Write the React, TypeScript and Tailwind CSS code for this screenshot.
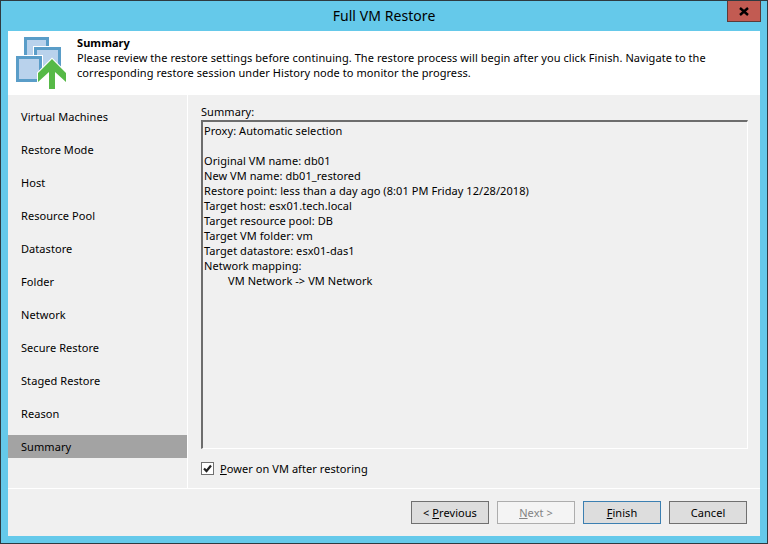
import type { ReactNode } from "react";

const STEPS = [
  "Virtual Machines",
  "Restore Mode",
  "Host",
  "Resource Pool",
  "Datastore",
  "Folder",
  "Network",
  "Secure Restore",
  "Staged Restore",
  "Reason",
  "Summary",
];

const SUMMARY_LINES = [
  "Proxy: Automatic selection",
  "",
  "Original VM name: db01",
  "New VM name: db01_restored",
  "Restore point: less than a day ago (8:01 PM Friday 12/28/2018)",
  "Target host: esx01.tech.local",
  "Target resource pool: DB",
  "Target VM folder: vm",
  "Target datastore: esx01-das1",
  "Network mapping:",
];

function RestoreIcon() {
  return (
    <svg width="52" height="54" viewBox="0 0 52 54" className="block">
      <rect x="9.5" y="1.5" width="22" height="22" fill="#b9d2ec" stroke="#5a9dc8" strokeWidth="3" />
      <rect x="17" y="9" width="29" height="29" fill="#fff" />
      <rect x="19.5" y="11.5" width="24" height="24" fill="#b9d2ec" stroke="#5a9dc8" strokeWidth="3" />
      <rect x="0" y="18" width="27" height="27" fill="#fff" />
      <rect x="1.5" y="20.5" width="23" height="23" fill="#b9d2ec" stroke="#5a9dc8" strokeWidth="3" />
      <path d="M36 20.5 L51 35.5 V46 H40 V53 H32 V46 H21 V35.5 Z" fill="#fff" />
      <path d="M36 22 L50 36 V45 L39 35 V52 H33 V35 L22 45 V36 Z" fill="#56b947" />
    </svg>
  );
}

function WizardButton({
  children,
  disabled,
  primary,
}: {
  children: ReactNode;
  disabled?: boolean;
  primary?: boolean;
}) {
  let tone = "border-[#707070] bg-[#dddddd] text-black";
  if (disabled) tone = "border-[#adadad] bg-[#f4f4f4] text-[#838383]";
  if (primary) tone = "border-[#3c7fb1] bg-[#dddddd] text-black";
  return (
    <button className={`flex h-[23px] w-[78px] items-center justify-center border ${tone}`}>
      {children}
    </button>
  );
}

export default function App() {
  return (
    <div className="flex h-[544px] w-[768px] flex-col overflow-hidden border border-[#2e3a40] bg-[#65c9ea] font-['Noto_Sans',sans-serif] text-[11px] leading-[15px] tracking-[0.065px] text-black">
      {/* TITLE BAR */}
      <div className="relative flex h-[30px] shrink-0 items-center justify-center pb-[1px] text-[14px]">
        Full VM Restore
        <div className="absolute right-[6px] top-[-1px] flex h-[22px] w-[34px] items-center justify-center border border-[#5c3a38] bg-[#c25b52]">
          <svg width="10" height="9" viewBox="0 0 10 9">
            <path d="M1 1 L9 8 M9 1 L1 8" stroke="#000" strokeWidth="2.4" />
          </svg>
        </div>
      </div>

      <div className="mx-[7px] flex min-h-0 flex-1 flex-col bg-[#f0f0f0]">
        {/* HEADER */}
        <div className="flex h-[64px] shrink-0 bg-white">
          <div className="pl-[8px] pt-[6px]">
            <RestoreIcon />
          </div>
          <div className="pl-[9px] pt-[4px]">
            <div className="font-bold">Summary</div>
            <p className="w-[650px]">
              Please review the restore settings before continuing. The restore process will begin after you click Finish. Navigate to the corresponding restore session under History node to monitor the progress.
            </p>
          </div>
        </div>

        {/* BODY */}
        <div className="flex h-[394px] shrink-0 border-b border-white">
          <nav className="flex w-[179px] shrink-0 flex-col gap-[10px] pt-[10px]">
            {STEPS.map((step) => (
              <div
                key={step}
                className={`flex h-[23px] items-center pl-[13px] ${step === "Summary" ? "bg-[#a3a3a3]" : ""}`}
              >
                {step}
              </div>
            ))}
          </nav>
          <div className="flex flex-1 flex-col border-l border-white pl-[13px] pr-[12px] pt-[9px]">
            <div className="h-[16px]">Summary:</div>
            <div className="h-[329px] border border-white border-l-[#6d6d6d] border-t-[#6d6d6d] border-l-2 border-t-2 pl-[1px] pt-[1px]">
              {SUMMARY_LINES.map((line, i) => (
                <div key={i} className="h-[15px] whitespace-pre">
                  {line}
                </div>
              ))}
              <div className="h-[15px] pl-[24px]">{"VM Network -> VM Network"}</div>
            </div>
            <label className="mt-[12px] flex items-center gap-[6px]">
              <span className="flex h-[13px] w-[13px] items-center justify-center border border-[#707070] bg-white">
                <svg width="11" height="11" viewBox="0 0 11 11">
                  <path d="M2 5.5 L4.5 8 L9 2.5" fill="none" stroke="#222" strokeWidth="2.2" />
                </svg>
              </span>
              <span>
                <span className="underline">P</span>ower on VM after restoring
              </span>
            </label>
          </div>
        </div>

        {/* FOOTER */}
        <div className="flex flex-1 items-start justify-end gap-[8px] pr-[13px] pt-[12px]">
          <WizardButton>
            &lt;&nbsp;<span className="underline">P</span>revious
          </WizardButton>
          <WizardButton disabled>
            <span className="underline">N</span>ext &gt;
          </WizardButton>
          <WizardButton primary>
            <span className="underline">F</span>inish
          </WizardButton>
          <WizardButton>Cancel</WizardButton>
        </div>
      </div>
      <div className="h-[7px] shrink-0" />
    </div>
  );
}
